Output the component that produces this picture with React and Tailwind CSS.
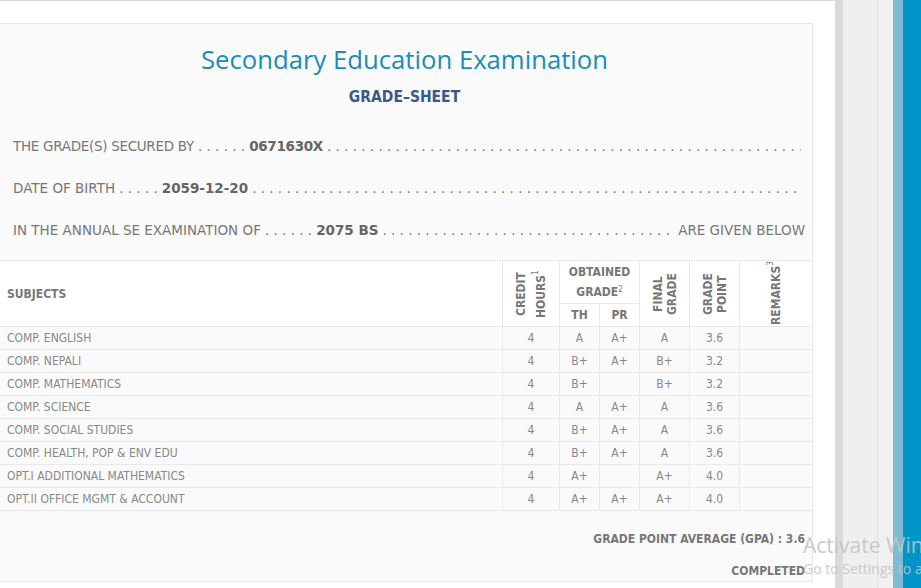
import React from 'react';

const rows = [
  ['COMP. ENGLISH', '4', 'A', 'A+', 'A', '3.6'],
  ['COMP. NEPALI', '4', 'B+', 'A+', 'B+', '3.2'],
  ['COMP. MATHEMATICS', '4', 'B+', '', 'B+', '3.2'],
  ['COMP. SCIENCE', '4', 'A', 'A+', 'A', '3.6'],
  ['COMP. SOCIAL STUDIES', '4', 'B+', 'A+', 'A', '3.6'],
  ['COMP. HEALTH, POP & ENV EDU', '4', 'B+', 'A+', 'A', '3.6'],
  ['OPT.I ADDITIONAL MATHEMATICS', '4', 'A+', '', 'A+', '4.0'],
  ['OPT.II OFFICE MGMT & ACCOUNT', '4', 'A+', 'A+', 'A+', '4.0'],
];

const DOTS = '. '.repeat(100);

const Leader = ({ count }) => (
  <span className="whitespace-pre px-[4px]">{'. '.repeat(count).trim()}</span>
);

const Fill = () => (
  <span className="flex-1 overflow-hidden whitespace-nowrap mx-[4px]">{DOTS}</span>
);

const Vertical = ({ children, lead = 'leading-[14px]' }) => (
  <div className="flex justify-center">
    <div className={`[writing-mode:vertical-rl] rotate-180 h-[62px] text-center ${lead}`}>
      {children}
    </div>
  </div>
);

export default function App() {
  return (
    <div className="relative w-[921px] h-[588px] overflow-hidden flex bg-white font-['DejaVu_Sans_Condensed','Liberation_Sans',sans-serif] text-[#777]">

      {/* Page */}
      <div className="w-[835px] border-t border-[#dcdcdc] pt-[22px] overflow-hidden">
        <div className="-ml-[4px] w-[817px] bg-[#fafafa] border border-[#e8e8e8] pt-[20px]">

          {/* Heading */}
          <h1 className="text-center text-[25.7px] leading-[32px] text-[#1a8db6] font-['Open_Sans',sans-serif]">
            Secondary Education Examination
          </h1>
          <h2 className="mt-[11px] text-center text-[15.5px] leading-[20px] font-bold text-[#3a5889] font-['DejaVu_Sans_Condensed',sans-serif]">
            GRADE–SHEET
          </h2>

          {/* Info lines */}
          <div className="mt-[29px] pl-[16px] pr-[7px] flex flex-col gap-[22px] text-[13.5px] leading-[20px] font-['DejaVu_Sans',sans-serif]">
            <div className="flex">
              <span className="tracking-[-0.3px]">THE GRADE(S) SECURED BY</span>
              <Leader count={6} />
              <span className="font-bold text-[#666] tracking-[-0.3px]">0671630X</span>
              <Fill />
            </div>
            <div className="flex">
              <span>DATE OF BIRTH</span>
              <Leader count={5} />
              <span className="font-bold text-[#666]">2059-12-20</span>
              <Fill />
            </div>
            <div className="flex">
              <span>IN THE ANNUAL SE EXAMINATION OF</span>
              <Leader count={6} />
              <span className="font-bold text-[#666]">2075 BS</span>
              <Fill />
              <span>ARE GIVEN BELOW</span>
            </div>
          </div>

          {/* Grade table */}
          <table className="mt-[20px] w-[815px] table-fixed border-collapse text-[12px]">
            <colgroup>
              <col className="w-[505px]" />
              <col className="w-[57px]" />
              <col className="w-[40px]" />
              <col className="w-[40px]" />
              <col className="w-[50px]" />
              <col className="w-[50px]" />
              <col className="w-[73px]" />
            </colgroup>
            <thead className="bg-white font-bold">
              <tr className="h-[43px]">
                <th rowSpan={2} className="border border-[#e9e9e9] text-left pl-[9px] align-middle">SUBJECTS</th>
                <th rowSpan={2} className="border border-[#e9e9e9] align-middle">
                  <Vertical lead="leading-[20px]">CREDIT<br />HOURS<sup className="static align-super text-[8px] font-normal">1</sup></Vertical>
                </th>
                <th colSpan={2} className="border border-[#e9e9e9] leading-[20px] align-middle">
                  OBTAINED<br />GRADE<sup className="text-[8px] font-normal">2</sup>
                </th>
                <th rowSpan={2} className="border border-[#e9e9e9] align-middle">
                  <Vertical>FINAL<br />GRADE</Vertical>
                </th>
                <th rowSpan={2} className="border border-[#e9e9e9] align-middle">
                  <Vertical>GRADE<br />POINT</Vertical>
                </th>
                <th rowSpan={2} className="border border-[#e9e9e9] align-middle">
                  <Vertical>REMARKS<sup className="static align-super text-[8px] font-normal">3</sup></Vertical>
                </th>
              </tr>
              <tr className="h-[23px]">
                <th className="border border-[#e9e9e9]">TH</th>
                <th className="border border-[#e9e9e9]">PR</th>
              </tr>
            </thead>
            <tbody className="bg-[#fafafa] text-[#888]">
              {rows.map((r) => (
                <tr key={r[0]} className="h-[23px]">
                  <td className="border border-[#e9e9e9] pl-[9px]">{r[0]}</td>
                  {r.slice(1).map((v, i) => (
                    <td key={i} className="border border-[#e9e9e9] text-center">{v}</td>
                  ))}
                  <td className="border border-[#e9e9e9]"></td>
                </tr>
              ))}
            </tbody>
          </table>

          {/* Summary */}
          <div className="pr-[7px] text-right text-[12px] font-bold text-[#777]">
            <p className="mt-[18px] leading-[20px]">GRADE POINT AVERAGE (GPA) : 3.6</p>
            <p className="mt-[12px] leading-[20px]">COMPLETED</p>
          </div>
        </div>
      </div>

      {/* Right rails */}
      <div className="w-[8px] bg-[#dadada]" />
      <div className="w-[35px] bg-[#efefef] border-r border-[#e0e0e0]" />
      <div className="w-[15px] bg-[#f0f0f0]" />
      <div className="w-[10px] bg-[#7fbcd3]" />
      <div className="flex-1 bg-[#0095c8]" />

      {/* Activate Windows watermark */}
      <div className="absolute left-[803px] top-[531px] whitespace-nowrap text-[#c4c4c4]/90 font-['Open_Sans',sans-serif] pointer-events-none">
        <p className="text-[21px] leading-[28px]">Activate Windows</p>
        <p className="text-[14px] leading-[20px]">Go to Settings to activate Windows.</p>
      </div>
    </div>
  );
}
